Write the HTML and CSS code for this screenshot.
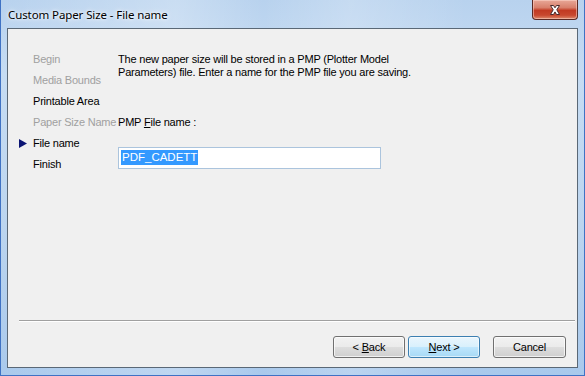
FILE: index.html
```html
<!DOCTYPE html>
<html>
<head>
<meta charset="utf-8">
<link rel="stylesheet" href="styles.css">
</head>
<body>
<div class="window">
  <div class="titlebar">
    <div class="title">Custom Paper Size - File name</div>
    <div class="close">
      <svg width="18" height="12" viewBox="0 0 18 12">
        <path d="M4.5 1.5 L7.5 1.5 L9 3.8 L10.5 1.5 L13.5 1.5 L10.8 5.8 L13.5 10.5 L10.5 10.5 L9 7.9 L7.5 10.5 L4.5 10.5 L7.2 5.8 Z" fill="#fff" stroke="#4a2a2a" stroke-width="1" stroke-linejoin="round"/>
      </svg>
    </div>
  </div>
  <div class="content">
    <div class="body">
      <ul class="nav">
        <li class="disabled"><span class="mark"></span>Begin</li>
        <li class="disabled"><span class="mark"></span>Media Bounds</li>
        <li><span class="mark"></span>Printable Area</li>
        <li class="disabled"><span class="mark"></span>Paper Size Name</li>
        <li class="current"><span class="mark"><svg width="8" height="9" viewBox="0 0 8 9"><path d="M0 0 L8 4.5 L0 9 Z" fill="#0a1473"/></svg></span>File name</li>
        <li><span class="mark"></span>Finish</li>
      </ul>
      <div class="main">
        <p class="intro">The new paper size will be stored in a PMP (Plotter Model<br>Parameters) file. Enter a name for the PMP file you are saving.</p>
        <p class="label">PMP <u>F</u>ile name :</p>
        <div class="input"><span class="sel">PDF_CADETT</span></div>
      </div>
    </div>
    <div class="sep"></div>
    <div class="buttons">
      <div class="btn"><span>&lt; <u>B</u>ack</span></div>
      <div class="btn default"><span><u>N</u>ext &gt;</span></div>
      <div class="btn cancel"><span>Cancel</span></div>
    </div>
  </div>
</div>
</body>
</html>
```
FILE: styles.css
```css
html, body {
  margin: 0;
  padding: 0;
}
body {
  width: 585px;
  height: 376px;
  overflow: hidden;
  font-family: "Liberation Sans", Arial, sans-serif;
  font-size: 11px;
  color: #000;
}
.window {
  box-sizing: border-box;
  width: 585px;
  height: 376px;
  display: flex;
  flex-direction: column;
  padding: 0 6px 7px 6px;
  border-left: 1px solid #3f72c4;
  border-right: 1px solid #3f72c4;
  border-bottom: 1px solid #3f72c4;
  background:
    linear-gradient(90deg, rgba(255,255,255,0) 0%, rgba(255,255,255,0.25) 30%, rgba(255,255,255,0) 45%, rgba(255,255,255,0.2) 60%, rgba(255,255,255,0) 80%),
    linear-gradient(180deg, #b8d2ee 0%, #c6dcf3 20%, #bcd5ef 60%, #a9c9ec 100%);
}
.titlebar {
  height: 28px;
  display: flex;
  align-items: flex-start;
  justify-content: space-between;
}
.title {
  font-family: "Noto Sans", "Open Sans", sans-serif;
  font-size: 11.5px;
  color: #000;
  padding: 7px 0 0 1px;
  text-shadow: 0 0 6px #fff, 0 0 3px #fff;
  letter-spacing: -0.1px;
}
.close {
  box-sizing: border-box;
  width: 46px;
  height: 20px;
  border: 1px solid #5a2a24;
  border-top: none;
  border-radius: 0 0 4px 4px;
  background: linear-gradient(180deg, #e8a898 0%, #d8806c 40%, #c23a22 55%, #c8482e 80%, #de8a6c 100%);
  display: flex;
  align-items: center;
  justify-content: center;
  box-shadow: inset 0 0 0 1px rgba(255,220,210,0.5);
}
.content {
  flex: 1;
  box-sizing: border-box;
  border: 1px solid #5a6876;
  background: #f0f0f0;
  display: flex;
  flex-direction: column;
  letter-spacing: -0.2px;
}
.body {
  flex: 1;
  display: flex;
  padding: 20px 0 0 11px;
}
.nav {
  list-style: none;
  margin: 0;
  padding: 0;
  width: 99px;
}
.nav li {
  height: 21px;
  line-height: 21px;
  display: flex;
  align-items: center;
  white-space: nowrap;
}
.nav li.disabled {
  color: #a0a0a0;
}
.mark {
  width: 14px;
  flex: none;
  display: flex;
  align-items: center;
}
.main {
  padding-top: 4px;
}
.intro {
  margin: 0;
  line-height: 13px;
  white-space: nowrap;
}
.label {
  margin: 37px 0 0 0;
  line-height: 13px;
}
.input {
  box-sizing: border-box;
  width: 263px;
  height: 22px;
  margin-top: 18px;
  border: 1px solid #abc4dd;
  background: #fff;
  padding: 2px 0 0 2px;
  font-size: 11.5px;
  letter-spacing: 0;
}
.sel {
  display: inline-block;
  background: #3399ff;
  color: #fff;
  line-height: 15px;
  padding: 0 1px;
}
.sep {
  height: 1px;
  background: #a0a0a0;
  border-bottom: 1px solid #fff;
  margin: 0 2px 0 11px;
}
.buttons {
  display: flex;
  justify-content: flex-end;
  padding: 14px 11px 9px 0;
}
.btn {
  box-sizing: border-box;
  width: 72px;
  height: 22px;
  border: 1px solid #707070;
  border-radius: 3px;
  background: linear-gradient(180deg, #f2f2f2 0%, #ebebeb 48%, #dddddd 52%, #cfcfcf 100%);
  box-shadow: inset 0 0 0 1px rgba(255,255,255,0.7);
  display: flex;
  align-items: center;
  justify-content: center;
  font-size: 11px;
  margin-left: 3px;
}
.btn.default {
  border-color: #3c7fb1;
  background: linear-gradient(180deg, #eaf6fd 0%, #d9f0fc 48%, #bee6fd 52%, #a7d9f5 100%);
  box-shadow: inset 0 0 0 1px rgba(255,255,255,0.6);
}
.btn.cancel {
  margin-left: 13px;
  width: 73px;
}
u {
  text-decoration: underline;
  text-underline-offset: 1px;
}
```
